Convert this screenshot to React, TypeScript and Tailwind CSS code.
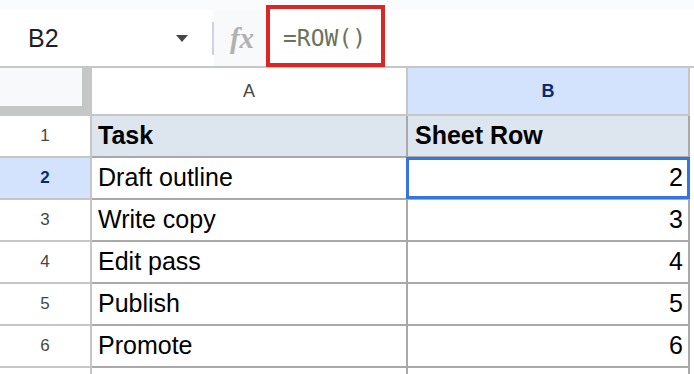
import { type ReactNode } from "react";

type Row = { n: number; a: string; b: string; head?: boolean; sel?: boolean };

const rows: Row[] = [
  { n: 1, a: "Task", b: "Sheet Row", head: true },
  { n: 2, a: "Draft outline", b: "2", sel: true },
  { n: 3, a: "Write copy", b: "3" },
  { n: 4, a: "Edit pass", b: "4" },
  { n: 5, a: "Publish", b: "5" },
  { n: 6, a: "Promote", b: "6" },
];

const Cell = ({ className, children }: { className: string; children?: ReactNode }) => (
  <div className={`flex h-full items-center border-b-2 border-r-2 ${className}`}>{children}</div>
);

export default function App() {
  return (
    <div className="relative h-[374px] w-[694px] overflow-hidden bg-white font-['Liberation_Sans',Arial,sans-serif] text-[#1f1f1f]">
      {/* Toolbar */}
      <div className="bg-[#f9fbfd] pt-[10px]">
        <div className="flex h-[58px] items-center border-b-2 border-[#c4c7c5] bg-white">
          <div className="flex h-full w-[212px] items-center pl-[28px] pr-[24px]">
            <span className="flex-1 text-[25px] leading-none">B2</span>
            <div className="h-0 w-0 border-x-[6px] border-t-[7px] border-x-transparent border-t-[#444746]" />
          </div>
          <div className="h-[33px] w-[2px] bg-[#c9d4e3]" />
          <div className="flex h-full w-[52px] items-center justify-center bg-[#f8f9fa] pl-[4px]">
            <span className="font-['Liberation_Serif',serif] text-[29px] font-bold italic leading-none text-[#b1b1b1]">
              fx
            </span>
          </div>
          <div className="flex h-full flex-1 items-center pl-[17px]">
            <span className="font-['DejaVu_Sans_Mono',monospace] text-[23px] leading-none text-[#6b735e]">
              =ROW()
            </span>
          </div>
        </div>
      </div>

      {/* Column headers */}
      <div className="flex h-[48px]">
        <div className="h-full w-[92px] bg-[#c4c7c5]">
          <div className="h-[38px] w-[82px] bg-[#f8f9fa]" />
        </div>
        <Cell className="w-[316px] justify-center border-[#c4c7c5] bg-white text-[18px] text-[#444746]">A</Cell>
        <Cell className="w-[282px] justify-center border-[#c4c7c5] bg-[#d3e3fd] text-[18px] font-bold text-[#0b2a6b]">
          B
        </Cell>
      </div>

      {/* Rows */}
      {rows.map((r) => (
        <div key={r.n} className="flex h-[42px]">
          <Cell
            className={`w-[92px] justify-center border-[#c4c7c5] text-[17px] ${
              r.sel ? "bg-[#d3e3fd] font-bold text-[#0b2a6b]" : "bg-white text-[#444746]"
            }`}
          >
            {r.n}
          </Cell>
          <Cell
            className={`w-[316px] border-[#a9a9a9] pl-[6px] text-[25px] ${
              r.head ? "bg-[#dde5ef] font-bold" : "bg-white"
            } text-black`}
          >
            {r.a}
          </Cell>
          <Cell
            className={`w-[282px] border-[#a9a9a9] text-[25px] text-black ${
              r.head ? "bg-[#dde5ef] pl-[7px] font-bold" : "justify-end bg-white pr-[5px]"
            }`}
          >
            {r.b}
          </Cell>
        </div>
      ))}
      <div className="flex h-[10px]">
        <div className="w-[92px] border-r-2 border-[#c4c7c5]" />
        <div className="w-[316px] border-r-2 border-[#a9a9a9]" />
        <div className="w-[282px] border-r-2 border-[#a9a9a9]" />
      </div>

      {/* Selected cell outline */}
      <div className="absolute left-[406px] top-[157px] h-[42px] w-[284px] border-[3px] border-[#3574e3]" />

      {/* Annotation around formula */}
      <div className="absolute left-[266px] top-[5px] h-[62px] w-[119px] border-[4px] border-[#dc2626]" />
    </div>
  );
}
